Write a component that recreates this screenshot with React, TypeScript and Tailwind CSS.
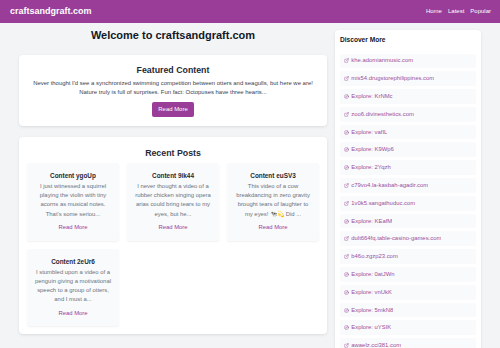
import { Compass, ExternalLink } from "lucide-react";

type Post = { title: string; body: string };

const posts: Post[] = [
  {
    title: "Content ygoUp",
    body: "I just witnessed a squirrel playing the violin with tiny acorns as musical notes. That's some seriou...",
  },
  {
    title: "Content 9ik44",
    body: "I never thought a video of a rubber chicken singing opera arias could bring tears to my eyes, but he...",
  },
  {
    title: "Content euSV3",
    body: "This video of a cow breakdancing in zero gravity brought tears of laughter to my eyes! 🐄💫 Did ...",
  },
  {
    title: "Content 2eUr6",
    body: "I stumbled upon a video of a penguin giving a motivational speech to a group of otters, and I must a...",
  },
];

type Link = { label: string; external: boolean };

const links: Link[] = [
  { label: "khe.adomianmusic.com", external: true },
  { label: "mis54.drugstorephilippines.com", external: true },
  { label: "Explore: KrNMc", external: false },
  { label: "zoo6.divinesthetics.com", external: true },
  { label: "Explore: vafIL", external: false },
  { label: "Explore: K9Wp6", external: false },
  { label: "Explore: 2Yqzh", external: false },
  { label: "c79vo4.la-kasbah-agadir.com", external: true },
  { label: "1v0k5.sangathuduc.com", external: true },
  { label: "Explore: KEafM", external: false },
  { label: "dult664fq.table-casino-games.com", external: true },
  { label: "b46o.zgzp23.com", external: true },
  { label: "Explore: 0atJWn", external: false },
  { label: "Explore: vnUkK", external: false },
  { label: "Explore: 5mkN8", external: false },
  { label: "Explore: uYSIK", external: false },
  { label: "awaelz.cci381.com", external: true },
];

function PostCard({ post }: { post: Post }) {
  return (
    <div className="flex flex-col items-center rounded-[3px] bg-[#f9fafb] p-[8px] text-center shadow-[0_1px_2px_rgba(0,0,0,0.06)]">
      <h3 className="mb-[2px] text-[6.4px] font-bold leading-[9px] text-[#1f2937]">{post.title}</h3>
      <p className="mb-[4.5px] text-[5.9px] leading-[9.2px] text-[#6b7280]">{post.body}</p>
      <a className="text-[5.9px] leading-[9.2px] text-[#993d98]">Read More</a>
    </div>
  );
}

export default function App() {
  return (
    <div className="h-screen overflow-y-scroll bg-[#f3f4f6] font-['Liberation_Sans',Arial,sans-serif] text-[#1f2937] [&::-webkit-scrollbar]:w-[7px] [&::-webkit-scrollbar-track]:bg-[#f1f1f1] [&::-webkit-scrollbar-thumb]:bg-[#c1c1c1]">
      <header className="flex h-[23px] items-center justify-between bg-[#993d98] pl-[10px] pr-[9px] text-white">
        <span className="text-[9px] font-bold">craftsandgraft.com</span>
        <nav className="flex gap-[6px] text-[6px]">
          <a>Home</a>
          <a>Latest</a>
          <a>Popular</a>
        </nav>
      </header>

      <div className="mx-auto flex w-[462px] items-start gap-[8px] pb-[16px] pt-[7px]">
        <main className="flex w-[308px] flex-col">
          <h1 className="mb-[14px] text-center text-[11px] font-bold leading-[11px] text-[#111827]">
            Welcome to craftsandgraft.com
          </h1>

          <section className="mb-[11px] flex flex-col items-center rounded-[4px] bg-white px-[9px] pb-[9px] pt-[9px] text-center shadow-[0_1px_3px_rgba(0,0,0,0.1)]">
            <h2 className="mb-[3px] text-[8.8px] font-bold leading-[12px]">Featured Content</h2>
            <p className="mb-[6px] text-[5.94px] leading-[8.5px] text-[#374151]">
              Never thought I'd see a synchronized swimming competition between otters and seagulls, but here we are!
              Nature truly is full of surprises. Fun fact: Octopuses have three hearts...
            </p>
            <button className="flex h-[15px] items-center rounded-[2px] bg-[#993d98] px-[6px] text-[5.94px] text-white">
              Read More
            </button>
          </section>

          <section className="rounded-[4px] bg-white px-[8px] pb-[8px] pt-[10px] shadow-[0_1px_3px_rgba(0,0,0,0.1)]">
            <h2 className="mb-[4px] text-center text-[8.8px] font-bold leading-[12px]">Recent Posts</h2>
            <div className="grid grid-cols-3 gap-[8px]">
              {posts.map((p) => (
                <PostCard key={p.title} post={p} />
              ))}
            </div>
          </section>
        </main>

        <aside className="flex w-[146px] flex-col rounded-[4px] bg-white p-[5px] shadow-[0_1px_3px_rgba(0,0,0,0.1)]">
          <h2 className="mb-[8.5px] text-[6.6px] font-bold leading-[10px] text-[#111827]">Discover More</h2>
          <ul className="flex flex-col gap-[3px]">
            {links.map((l, i) => (
              <li
                key={i}
                className="flex h-[14.8px] items-center gap-[2.3px] rounded-[2px] bg-[#f9fafb] px-[4px] text-[5.9px] text-[#9b4f9b]"
              >
                {l.external ? (
                  <ExternalLink className="h-[5px] w-[5px] shrink-0" strokeWidth={2} />
                ) : (
                  <Compass className="h-[5px] w-[5px] shrink-0" strokeWidth={2} />
                )}
                <span className="truncate">{l.label}</span>
              </li>
            ))}
          </ul>
        </aside>
      </div>
    </div>
  );
}
